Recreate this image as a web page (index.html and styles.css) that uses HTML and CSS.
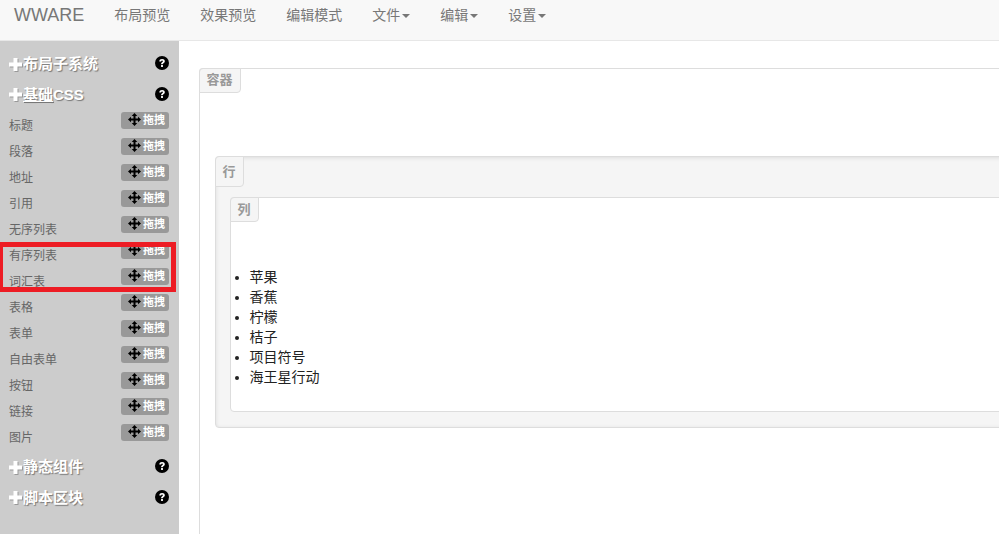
FILE: index.html
```html
<!DOCTYPE html>
<html lang="zh-CN">
<head>
<meta charset="utf-8">
<title>WWARE</title>
<link rel="stylesheet" href="styles.css">
</head>
<body>
<svg class="defs" width="0" height="0" aria-hidden="true">
  <defs>
    <symbol id="plus" viewBox="0 0 13 13"><path d="M4.500 0h4v4.500H13v4H8.500V13h-4V8.500H0v-4h4.500z"/></symbol>
    <symbol id="move" viewBox="0 0 13 13"><path d="M6.500 0 9.300 3H7.500V5.500H10V3.700L13 6.500 10 9.300V7.500H7.500V10H9.300L6.500 13 3.700 10H5.500V7.500H3V9.300L0 6.500 3 3.700V5.500H5.500V3H3.700z"/></symbol>
    <symbol id="help" viewBox="0 0 14 14"><circle cx="7" cy="7" r="7" fill="#000"/><path d="M4.300 5.400C4.400 3.700 5.500 3 7.100 3c1.600 0 2.700.8 2.700 2.200 0 1-.6 1.500-1.300 2-.5.300-.7.600-.7 1.100H6.100c0-1 .3-1.500 1-2 .5-.3.800-.6.800-1 0-.5-.3-.8-.8-.8-.6 0-.9.300-1 .9zM6.100 9.100h1.800v1.800H6.100z" fill="#fff"/></symbol>
  </defs>
</svg>
<nav class="navbar">
  <a class="brand">WWARE</a>
  <a class="nav-link">布局预览</a>
  <a class="nav-link">效果预览</a>
  <a class="nav-link">编辑模式</a>
  <a class="nav-link">文件<i class="caret"></i></a>
  <a class="nav-link">编辑<i class="caret"></i></a>
  <a class="nav-link">设置<i class="caret"></i></a>
</nav>
<div class="page">
  <aside class="sidebar">
    <div class="heading"><span class="heading-title"><svg class="plus"><use href="#plus"/></svg>布局子系统</span><svg class="help"><use href="#help"/></svg></div>
    <div class="heading"><span class="heading-title"><svg class="plus"><use href="#plus"/></svg><u>基础</u>CSS</span><svg class="help"><use href="#help"/></svg></div>
    <ul class="items">
      <li class="item"><span class="item-name">标题</span><span class="drag"><svg class="move"><use href="#move"/></svg>拖拽</span></li>
      <li class="item"><span class="item-name">段落</span><span class="drag"><svg class="move"><use href="#move"/></svg>拖拽</span></li>
      <li class="item"><span class="item-name">地址</span><span class="drag"><svg class="move"><use href="#move"/></svg>拖拽</span></li>
      <li class="item"><span class="item-name">引用</span><span class="drag"><svg class="move"><use href="#move"/></svg>拖拽</span></li>
      <li class="item"><span class="item-name">无序列表</span><span class="drag"><svg class="move"><use href="#move"/></svg>拖拽</span></li>
      <li class="item"><span class="item-name">有序列表</span><span class="drag"><svg class="move"><use href="#move"/></svg>拖拽</span></li>
      <li class="item"><span class="item-name">词汇表</span><span class="drag"><svg class="move"><use href="#move"/></svg>拖拽</span></li>
      <li class="item"><span class="item-name">表格</span><span class="drag"><svg class="move"><use href="#move"/></svg>拖拽</span></li>
      <li class="item"><span class="item-name">表单</span><span class="drag"><svg class="move"><use href="#move"/></svg>拖拽</span></li>
      <li class="item"><span class="item-name">自由表单</span><span class="drag"><svg class="move"><use href="#move"/></svg>拖拽</span></li>
      <li class="item"><span class="item-name">按钮</span><span class="drag"><svg class="move"><use href="#move"/></svg>拖拽</span></li>
      <li class="item"><span class="item-name">链接</span><span class="drag"><svg class="move"><use href="#move"/></svg>拖拽</span></li>
      <li class="item"><span class="item-name">图片</span><span class="drag"><svg class="move"><use href="#move"/></svg>拖拽</span></li>
    </ul>
    <div class="heading"><span class="heading-title"><svg class="plus"><use href="#plus"/></svg>静态组件</span><svg class="help"><use href="#help"/></svg></div>
    <div class="heading"><span class="heading-title"><svg class="plus"><use href="#plus"/></svg>脚本区块</span><svg class="help"><use href="#help"/></svg></div>
    <div class="highlight"></div>
  </aside>
  <main class="main">
    <section class="box box-container">
      <span class="tab tab-container">容器</span>
      <section class="box box-row">
        <span class="tab tab-row">行</span>
        <section class="box box-col">
          <span class="tab tab-col">列</span>
          <ul class="fruit">
            <li>苹果</li>
            <li>香蕉</li>
            <li>柠檬</li>
            <li>桔子</li>
            <li>项目符号</li>
            <li>海王星行动</li>
          </ul>
        </section>
      </section>
    </section>
  </main>
</div>
</body>
</html>
```
FILE: styles.css
```css
* { box-sizing: border-box; }
html, body { height: 100%; }
body {
  margin: 0;
  overflow: hidden;
  font-family: "Liberation Sans", "Noto Sans CJK SC", sans-serif;
  font-size: 14px;
  line-height: 20px;
  color: #333;
  background: #fff;
}
.defs { position: absolute; }

.navbar {
  display: flex;
  height: 41px;
  padding-top: 5px;
  background: #f8f8f8;
  border-bottom: 1px solid #e7e7e7;
  color: #777;
}
.brand { font-size: 18px; padding: 0 15px 0 14px; }
.nav-link { padding: 0 15px; white-space: nowrap; }
.caret {
  display: inline-block;
  width: 0;
  height: 0;
  margin-left: 2px;
  vertical-align: middle;
  border-top: 4px solid #777;
  border-left: 4px solid transparent;
  border-right: 4px solid transparent;
}

.page { display: flex; height: 493px; }
.sidebar {
  position: relative;
  flex: 0 0 179px;
  padding: 8.500px 10px 0 9px;
  background: #ccc;
}
.heading {
  display: flex;
  justify-content: space-between;
  height: 30.500px;
  padding-top: 4px;
}
.heading-title {
  display: flex;
  align-items: center;
  height: 21px;
  font-size: 15px;
  font-weight: bold;
  color: #fff;
  text-shadow: 1px 1px 1px #777;
}
.heading-title u { text-decoration: underline; }
.plus {
  width: 13px;
  height: 13px;
  margin-right: 1px;
  fill: #fff;
  filter: drop-shadow(1px 1px 0 #999);
}
.help { width: 14px; height: 14px; margin-top: 2.500px; }
.items { list-style: none; margin: 0 0 2.500px; padding: 1.500px 0 0; }
.item {
  display: flex;
  justify-content: space-between;
  height: 26px;
  color: #666;
  font-size: 12px;
}
.item-name { padding-top: 4px; }
.drag {
  display: flex;
  align-items: center;
  width: 48px;
  height: 17px;
  padding: 0 0 1px 7px;
  font-size: 11px;
  font-weight: bold;
  line-height: 16px;
  color: #fff;
  background: #999;
  border-radius: 3px;
}
.move { width: 13px; height: 13px; margin-right: 2px; margin-top: -2px; }
.highlight {
  position: absolute;
  left: 0;
  top: 201px;
  width: 176px;
  height: 50px;
  border: 5px solid #ed1c24;
  border-left-width: 3px;
}

.main { flex: 1; min-width: 0; overflow: hidden; padding: 27px 0 0 20px; }
.box {
  position: relative;
  margin-right: -12px;
  border: 1px solid #ddd;
  border-radius: 4px;
  background: #fff;
}
.box-container {
  height: 480px;
  padding: 87px 0 0 15px;
  border-bottom: 0;
}
.box-row {
  height: 272px;
  padding: 40px 0 0 14px;
  background: #f5f5f5;
  box-shadow: inset 0 1px 4px rgba(0, 0, 0, .1);
}
.box-col {
  height: 215px;
  padding: 61px 0 0 0;
}
.tab {
  position: absolute;
  left: -1px;
  top: -1px;
  padding: 0 7.500px 0 6.500px;
  font-size: 13px;
  font-weight: bold;
  color: #999;
  background: #f5f5f5;
  border: 1px solid #ddd;
  border-radius: 4px 0 4px 0;
}
.tab-container { height: 25px; line-height: 21px; }
.tab-row { height: 31px; line-height: 29px; }
.tab-col { height: 25px; line-height: 23px; }
.fruit { margin: 0; padding: 8px 0 0 18.500px; color: #222; }
```
